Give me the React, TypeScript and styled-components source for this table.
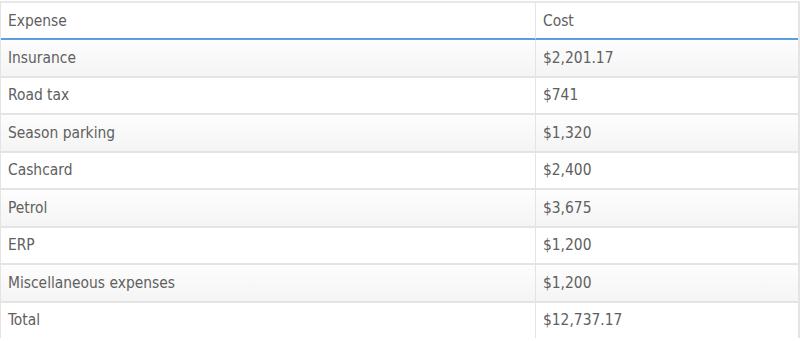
import styled, { createGlobalStyle } from 'styled-components';

const GlobalStyle = createGlobalStyle`
  html, body {
    margin: 0;
    padding: 0;
    background: #fff;
  }
`;

type TExpense = {
  name: string;
  cost: string;
};

const expenses: TExpense[] = [
  { name: 'Insurance', cost: '$2,201.17' },
  { name: 'Road tax', cost: '$741' },
  { name: 'Season parking', cost: '$1,320' },
  { name: 'Cashcard', cost: '$2,400' },
  { name: 'Petrol', cost: '$3,675' },
  { name: 'ERP', cost: '$1,200' },
  { name: 'Miscellaneous expenses', cost: '$1,200' },
  { name: 'Total', cost: '$12,737.17' },
];

const App = () => {
  return (
    <>
      <GlobalStyle />
      <Wrapper>
        <Table>
          <thead>
            <tr>
              <HeadCell>Expense</HeadCell>
              <HeadCell>Cost</HeadCell>
            </tr>
          </thead>
          <tbody>
            {expenses.map((item, i) => (
              <Row key={item.name} $striped={i % 2 === 0}>
                <Cell>{item.name}</Cell>
                <Cell>{item.cost}</Cell>
              </Row>
            ))}
          </tbody>
        </Table>
      </Wrapper>
    </>
  );
};

export default App;

const Wrapper = styled.div`
  padding-top: 1px;
  width: 800px;
`;

const Table = styled.table`
  width: 800px;
  border-spacing: 0;
  border-top: 2px solid #e8e8e8;
  border-left: 1px solid #e4e4e4;
  border-right: 2px solid #e4e4e4;
  box-sizing: border-box;
  font-family: 'DejaVu Sans Condensed', 'DejaVu Sans', sans-serif;
  font-size: 15.4px;
  color: #606060;
  table-layout: fixed;

  th:first-child,
  td:first-child {
    width: 520px;
    border-right: 1px solid #e4e4e4;
  }
`;

const HeadCell = styled.th`
  height: 34px;
  padding: 1px 7px 0;
  text-align: left;
  font-weight: normal;
  border-bottom: 2px solid #5b9ce3;
`;

const Row = styled.tr<{ $striped: boolean }>`
  background: ${({ $striped }) =>
    $striped ? 'linear-gradient(#fdfdfd, #f4f4f4)' : '#fff'};
`;

const Cell = styled.td`
  height: 35.5px;
  padding: 0 7px;
  border-bottom: 2px solid #e4e4e4;

  tr:last-child & {
    border-bottom: none;
  }
`;
